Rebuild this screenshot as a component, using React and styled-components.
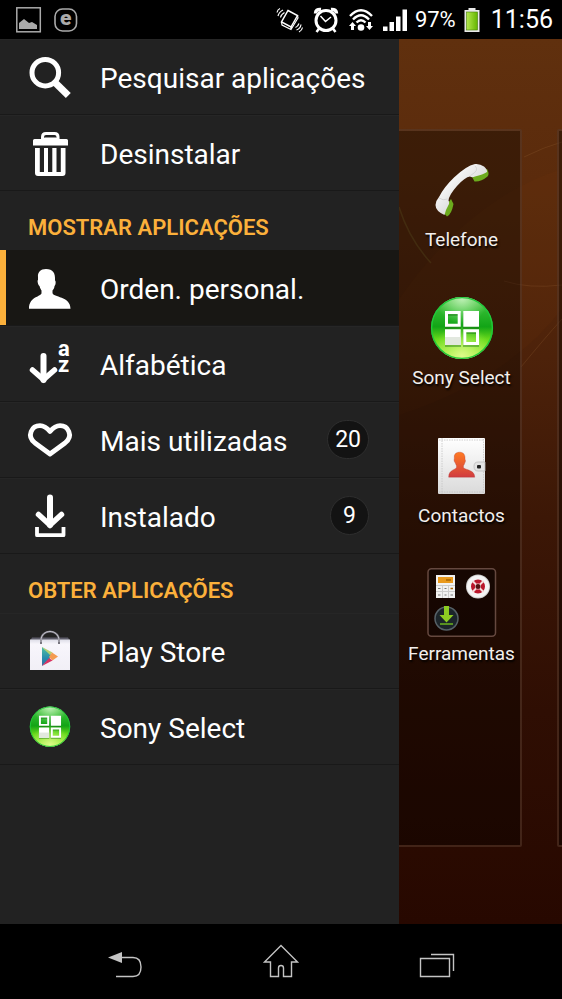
import React from 'react';
import styled, { createGlobalStyle, css } from 'styled-components';

const GlobalStyle = createGlobalStyle`
  * { box-sizing: border-box; }
  body { margin: 0; background: #000; font-family: Roboto, "Liberation Sans", sans-serif; color: #fff; }
  button { font: inherit; color: inherit; border: 0; padding: 0; margin: 0; background: none; cursor: pointer; }
  h2, ul { margin: 0; padding: 0; }
  ul { list-style: none; }
  svg { display: block; flex: none; overflow: visible; }
`;

const Screen = styled.div`
  display: flex;
  flex-direction: column;
  min-height: 100vh;
`;

const StatusBar = styled.header`
  display: flex;
  align-items: center;
  justify-content: space-between;
  height: 39px;
  padding: 0 9px 0 16px;
  background: #000;
`;

const StatusGroup = styled.div`
  display: flex;
  align-items: center;
  gap: ${(p) => p.$gap}px;
`;

const BatteryLevel = styled.span`
  font-size: 22px;
  line-height: 26px;
`;

const Clock = styled.time`
  margin-left: 3px;
  font-size: 25px;
  line-height: 30px;
`;

const Body = styled.main`
  flex: 1;
  display: grid;
  grid-template-columns: 71fr 29fr;
`;

const Drawer = styled.nav`
  background: #222;
`;

const Row = styled.button`
  display: flex;
  align-items: center;
  width: 100%;
  height: 76px;
  padding: 0 30px 0 28px;
  text-align: left;
  border-bottom: 1px solid #191919;
  box-shadow: inset 0 1px #262626;
  ${(p) => p.$active && css`
    background: #181714;
    box-shadow: inset 6px 0 #fbb03b;
  `}
`;

const RowLabel = styled.span`
  flex: 1;
  padding: 4px 0 0 28px;
  font-size: 28px;
  line-height: 34px;
  white-space: nowrap;
`;

const Badge = styled.span`
  min-width: 39px;
  height: 39px;
  padding: 0 7px;
  border: 1px solid #2e2e2e;
  border-radius: 20px;
  background: #131313;
  font-size: 23px;
  line-height: 37px;
  text-align: center;
`;

const SectionTitle = styled.h2`
  height: 59px;
  padding: 23px 28px 0;
  color: #fbb03b;
  font-size: 22px;
  font-weight: 600;
  line-height: 28px;
  white-space: nowrap;
`;

const Home = styled.section`
  position: relative;
  display: grid;
  grid-template-columns: 1fr 5px;
  gap: 35px;
  padding: 90px 0 77px;
  overflow: hidden;
  background: linear-gradient(#60300e 0%, #5b2b0c 16%, #4d220a 36%, #3c1706 54%, #2f0e03 76%, #270800 100%);
`;

const WallpaperLines = styled.svg`
  position: absolute;
  inset: 0;
  width: 100%;
  height: 100%;
`;

const Pane = styled.ul`
  position: relative;
  padding: 23px 0 0 4px;
  border: 2px solid rgba(150, 100, 75, 0.32);
  border-left-width: ${(p) => (p.$peek ? 2 : 0)}px;
  border-right-width: ${(p) => (p.$peek ? 0 : 2)}px;
  border-radius: ${(p) => (p.$peek ? '2px 0 0 2px' : '0 2px 2px 0')};
  background: rgba(0, 0, 0, 0.35);
`;

const AppTile = styled.button`
  display: flex;
  flex-direction: column;
  align-items: center;
  width: 100%;
  height: 138px;
`;

const AppName = styled.span`
  margin-top: 2px;
  font-size: 19px;
  line-height: 24px;
  white-space: nowrap;
  color: #f2efed;
  text-shadow: 1px 2px 2px #000;
`;

const SystemBar = styled.footer`
  display: flex;
  align-items: center;
  height: 75px;
  padding: 0 47px;
  background: #000;
`;

const SystemButton = styled.button`
  flex: 1;
  display: flex;
  justify-content: center;
`;

const RowIcon = ({ children }) => (
  <svg width="44" height="48" viewBox="0 0 44 48" fill="none" stroke="#fff" aria-hidden="true">{children}</svg>
);

const TileIcon = ({ children }) => (
  <svg width="72" height="72" viewBox="0 0 72 72" fill="none" aria-hidden="true">{children}</svg>
);

const SelectMark = ({ id }) => (
  <g stroke="none">
    <defs>
      <linearGradient id={id + 'g'} x1="0" y1="0" x2="0" y2="1">
        <stop offset="0" stopColor="#66c95c" />
        <stop offset=".25" stopColor="#2bb62c" />
        <stop offset=".48" stopColor="#12a416" />
        <stop offset=".68" stopColor="#66d81a" />
        <stop offset="1" stopColor="#b5f04e" />
      </linearGradient>
      <radialGradient id={id + 'h'} cx=".5" cy=".02" r=".42">
        <stop offset="0" stopColor="#e0ffd8" stopOpacity=".75" />
        <stop offset="1" stopColor="#c0ffb0" stopOpacity="0" />
      </radialGradient>
      <radialGradient id={id + 'b'} cx=".5" cy=".95" r=".5">
        <stop offset="0" stopColor="#eaff9a" stopOpacity=".8" />
        <stop offset="1" stopColor="#caff70" stopOpacity="0" />
      </radialGradient>
    </defs>
    <circle r="31" fill={`url(#${id}g)`} />
    <circle r="31" fill={`url(#${id}h)`} />
    <circle r="31" fill={`url(#${id}b)`} />
    <circle r="30.4" stroke="#20c93b" strokeWidth="1.4" fill="none" />
    <path fill="#176b12" opacity=".4" fillRule="evenodd" d="M-17-15H-1V1H-17zM-14-12V-3H-4V-12zM1-15H17V1H1zM-17 3H-1V19H-17zM1 3H17V19H1zM4 6V15H14V6z" />
    <path fill="#fff" fillRule="evenodd" d="M-17-17H-1.300V-1.300H-17zM-14-14V-4.300H-4.300V-14zM1.300-17H17V-1.300H1.300zM-17 1.300H-1.300V17H-17zM1.300 1.300H17V17H1.300zM4.300 4.300V14H14V4.300z" />
    <path fill="#e2e8df" d="M-17 9H-1.300V17H-17z" />
  </g>
);

const SearchIcon = () => (
  <RowIcon>
    <circle cx="17.300" cy="19.700" r="13.300" strokeWidth="5" />
    <path d="M27 29.500 40.300 42.500" strokeWidth="7" />
  </RowIcon>
);

const TrashIcon = () => (
  <RowIcon>
    <path d="M14.500 11V8Q14.500 4.500 18 4.500H26.500Q30 4.500 30 8V11" strokeWidth="3" />
    <path d="M5 11.500Q5 10 6.500 10H13Q15 8.500 17 8.500H28Q30 8.500 31.500 10H38.500Q40 10 40 11.500V16.500H5z" fill="#fff" stroke="none" />
    <path d="M7 19H11.800V43H16V19H20V43H24.300V19H28.500V43H32.800V19H37.500V44Q37.500 47 34.500 47H10Q7 47 7 44z" fill="#fff" stroke="none" />
  </RowIcon>
);

const personPath = 'M18 5C12.500 5 9.500 8.500 10 13V16C9 16.500 10 21 11.500 22C12 24 13 25.500 13.500 26.500V29C13.500 33 1 32 1 44.700H42.500C42.500 32 25 33.500 24.500 29V26.500C25.500 25 26.500 24 26.500 22C28 21 28 16.500 27 16.500C27.500 9 25 5 18 5z';

const PersonIcon = () => (
  <RowIcon><path d={personPath} fill="#fff" stroke="none" /></RowIcon>
);

const SortLetters = styled.text`
  fill: #fff;
  stroke: none;
  font: bold 22px Roboto, sans-serif;
`;

const AlphabetIcon = () => (
  <RowIcon>
    <path d="M15.500 16V40" strokeWidth="6" strokeLinecap="round" />
    <path d="M4.500 30 15.500 39.500 26.500 30" strokeWidth="5.500" strokeLinecap="round" />
    <SortLetters x="30" y="16">a</SortLetters>
    <SortLetters x="30" y="32">z</SortLetters>
  </RowIcon>
);

const HeartIcon = () => (
  <RowIcon>
    <path d="M22 38 7 27C-2 19.500 4 9.700 12 9.700C16 9.700 19 12 22 15.500C25 12 28 9.700 32 9.700C40 9.700 46 19.500 37 27z" strokeWidth="4.800" strokeLinejoin="round" />
  </RowIcon>
);

const InstallIcon = () => (
  <RowIcon>
    <path d="M22 5.500V33" strokeWidth="6" strokeLinecap="round" />
    <path d="M10.500 22.500 22 33 33.500 22.500" strokeWidth="5.500" strokeLinecap="round" />
    <path d="M9 35V43.200H35.500V35" strokeWidth="3.800" strokeLinejoin="round" />
  </RowIcon>
);

const PlayStoreIcon = () => (
  <RowIcon>
    <defs>
      <linearGradient id="bag" x1="0" y1="0" x2="0" y2="1">
        <stop offset="0" stopColor="#dcdce6" />
        <stop offset=".15" stopColor="#f8f6fc" />
        <stop offset="1" stopColor="#f1eff6" />
      </linearGradient>
      <linearGradient id="playBlue" x1="0" y1="0" x2="0" y2="1">
        <stop offset="0" stopColor="#4fbfa0" />
        <stop offset=".6" stopColor="#258aae" />
        <stop offset="1" stopColor="#3e6c9c" />
      </linearGradient>
    </defs>
    <path d="M4 10.500H40L42 14H2z" fill="#5c5b68" stroke="none" />
    <path d="M2 12.500H42V43H2z" fill="url(#bag)" stroke="none" />
    <path d="M14 20 24.500 29 14 39z" fill="url(#playBlue)" stroke="none" />
    <path d="M14 20 24.500 25.500 22 28z" fill="#b6cf71" stroke="none" />
    <path d="M24 25.500 30 29.500 24.500 33.500 21 30z" fill="#f49b50" stroke="none" />
    <path d="M14 39 21 31 24.500 33.500z" fill="#d83263" stroke="none" />
    <path d="M13 17V13.500C13 1.500 31 1.500 31 13.500V17" stroke="#77757e" strokeWidth="2" />
    <path d="M13 15V13.500C13 1.500 31 1.500 31 13.500V15" stroke="#d6d5df" strokeWidth=".8" />
  </RowIcon>
);

const SelectIcon = () => (
  <RowIcon><g transform="translate(22 23.700) scale(.65)"><SelectMark id="menu" /></g></RowIcon>
);

const PhoneTile = () => (
  <TileIcon>
    <defs>
      <linearGradient id="handset" x1="0" y1="0" x2="1" y2="1">
        <stop offset=".2" stopColor="#fff" />
        <stop offset=".6" stopColor="#dcdcdc" />
      </linearGradient>
    </defs>
    <path d="M45 21 61 15Q64 20 61.500 22.500Q55 28 48.500 27.500zM16 57 21 62.500Q25.500 60.500 27.500 50L25 45z" fill="#6cab1d" />
    <path d="M49 10Q54 9.500 58 12.500Q61.500 15.500 61 18Q57 20.500 49 22.500Q46 24 44 22.500Q39 23 31 32Q23 41 22.500 46.500Q24 49 22 52Q19.500 56 18.500 61Q9.500 57 9.500 51Q9.500 47 13 43Q18 33 28 23.500Q40 12 49 10z" fill="url(#handset)" />
    <path d="M49 12Q54 16 44.500 21.500M13 44Q17 47 21.500 45" stroke="#cfcfcf" strokeWidth=".8" />
  </TileIcon>
);

const SelectTile = () => (
  <TileIcon><g transform="translate(36 36)"><SelectMark id="tile" /></g></TileIcon>
);

const ContactsTile = () => (
  <TileIcon>
    <defs>
      <linearGradient id="paper" x1="0" y1="0" x2="0" y2="1">
        <stop offset="0" stopColor="#fff" />
        <stop offset="1" stopColor="#dadada" />
      </linearGradient>
      <linearGradient id="contact" x1="0" y1="0" x2="0" y2="1">
        <stop offset="0" stopColor="#ff7a22" />
        <stop offset="1" stopColor="#d13c40" />
      </linearGradient>
    </defs>
    <rect x="12" y="8" width="47" height="56" rx="1" fill="url(#paper)" />
    <path d="M16 8V64M13 10H58M13 62H58M57.500 9V63" stroke="#c4c4c4" strokeWidth=".8" strokeDasharray="1.500 1" />
    <g transform="translate(22 19) scale(.63)"><path d={personPath} fill="url(#contact)" stroke="#a33" strokeWidth=".5" /></g>
    <path d="M59 32H52Q48 32 48 36.500T52 41H59z" fill="#e4e4e4" stroke="#bbb" strokeWidth=".8" />
    <rect x="51" y="35" width="4" height="3.500" rx="1" fill="#222" />
  </TileIcon>
);

const ToolsTile = () => (
  <TileIcon>
    <rect x="2" y=".8" width="67.500" height="67.500" rx="3.500" fill="#0d0301" fillOpacity=".6" stroke="#65483f" strokeWidth="1.500" />
    <rect x="10" y="7" width="19" height="23" fill="#f1f1f1" />
    <rect x="12" y="9" width="15" height="6" fill="#e9991d" />
    <path d="M10 17.500H29M10 23.500H29M16.500 17V30M22.500 17V30" stroke="#ccc" strokeWidth="1" />
    <path d="M12 20.500H14.500M18.500 20.500H20.500M12 27H14.500M18.500 27H20.500M24.500 27H27" stroke="#777" />
    <path d="M24.500 20.500H27M20 12H25" stroke="#a96500" strokeWidth="1.500" />
    <circle cx="52" cy="18.500" r="12" fill="#d0d0d0" />
    <circle cx="52" cy="18.500" r="11" fill="#f4f4f4" />
    <circle cx="52" cy="18.500" r="5" stroke="#b9162b" strokeWidth="4" />
    <path d="M46.500 13 57.500 24M57.500 13 46.500 24" stroke="#f5d9d9" strokeWidth="2" />
    <circle cx="52" cy="18.500" r="2.500" fill="#511" />
    <circle cx="20.500" cy="50.500" r="11.500" fill="#1c252a" stroke="#566167" strokeWidth="1.500" />
    <path d="M18 38H23V47H27.500L20.500 54.500 13.500 47H18z" fill="#8dcc22" />
    <path d="M14 56H27" stroke="#6cb51f" strokeWidth="1.500" />
  </TileIcon>
);

const GalleryStatus = () => (
  <svg width="26" height="26" viewBox="0 0 26 26" fill="none" role="img" aria-label="Imagem">
    <rect x=".8" y=".8" width="23.500" height="24" stroke="#aaa" strokeWidth="1.500" />
    <path d="M3 22V16L8 12 13 16 16 15 21 18V22z" fill="#aaa" />
  </svg>
);

const ELetter = styled.text`
  fill: #aaa;
  font: 900 21px Roboto, sans-serif;
`;

const EStatus = () => (
  <svg width="26" height="26" viewBox="0 0 26 26" fill="none" role="img" aria-label="Notificação">
    <rect x="2" y="2" width="21.500" height="22" rx="7.500" stroke="#aaa" strokeWidth="1.600" />
    <ELetter x="7" y="18">e</ELetter>
  </svg>
);

const VibrateStatus = () => (
  <svg width="26" height="26" viewBox="0 0 26 26" fill="none" stroke="#fff" strokeWidth="1.500" role="img" aria-label="Vibração">
    <path d="M11 3.500 20.500 8.500 14 20 4.500 15z" />
    <path d="M4.500 15 5 18 14 22.500 21 11 20.500 8.500M14 20V22.500" strokeWidth="1.200" />
    <path d="M0 5.500Q.5 2.500 3 1.500M1 9Q2 5 6 3M3.500 10.500Q4 7.500 7.500 5.500M18.500 20.500Q21 19.500 22 16.500M19.500 23Q23.500 21.500 24 17.500M22 25Q25 23.500 25.500 20.500" strokeWidth="1.200" />
  </svg>
);

const AlarmStatus = () => (
  <svg width="26" height="26" viewBox="0 0 26 26" fill="none" stroke="#fff" role="img" aria-label="Alarme">
    <path d="M2.500 6.500Q2.500 2 8 2.500M23.500 6.500Q23.500 2 18 2.500" strokeWidth="3.500" />
    <circle cx="13" cy="13.500" r="10" strokeWidth="3" />
    <path d="M7.500 9 12.500 14.500 18 10" strokeWidth="1.500" />
    <path d="M6.500 21 3.500 25M19.500 21 22.500 25" strokeWidth="2.500" />
  </svg>
);

const WifiStatus = () => (
  <svg width="24" height="24" viewBox="0 0 24 24" fill="none" stroke="#fff" role="img" aria-label="Wi-Fi">
    <path d="M1 8Q12-3.500 23 8M4 11.500Q12 3 20 11.500M7.500 14.500Q12 10 16.500 14.500" strokeWidth="2.400" />
    <circle cx="12" cy="19.500" r="3.300" fill="#fff" stroke="none" />
    <path d="M0 18 3.500 14 7 18H5V22H2V18zM17 18H19V14H22V18H24L20.500 22z" fill="#fff" stroke="none" />
  </svg>
);

const SignalStatus = () => (
  <svg width="24" height="24" viewBox="0 0 24 24" fill="#fff" role="img" aria-label="Rede móvel">
    <path d="M0 18.500H4.500V23H0zM6.500 14H11V23H6.500zM13 8.500H17.500V23H13zM19.500 1.500H24V23H19.500z" />
  </svg>
);

const BatteryStatus = () => (
  <svg width="16" height="26" viewBox="0 0 16 26" role="img" aria-label="Bateria">
    <defs>
      <linearGradient id="charge">
        <stop offset="0" stopColor="#b5e84f" />
        <stop offset="1" stopColor="#64b500" />
      </linearGradient>
    </defs>
    <path d="M4.500 1H11.500V3H15.500V25H.5V3H4.500z" fill="#e9e9e9" />
    <rect x="2.500" y="5" width="11" height="18" fill="url(#charge)" stroke="#457d09" strokeWidth=".6" />
  </svg>
);

const systemIcon = { width: 36, height: 36, viewBox: '0 0 36 36', fill: 'none', stroke: '#c4c4c4', strokeWidth: 1.4, 'aria-hidden': true };

const displayGroup = [
  { label: 'Orden. personal.', Icon: PersonIcon, active: true },
  { label: 'Alfabética', Icon: AlphabetIcon },
  { label: 'Mais utilizadas', Icon: HeartIcon, count: 20 },
  { label: 'Instalado', Icon: InstallIcon, count: 9 },
];
const toolGroup = [
  { label: 'Pesquisar aplicações', Icon: SearchIcon },
  { label: 'Desinstalar', Icon: TrashIcon },
];
const storeGroup = [
  { label: 'Play Store', Icon: PlayStoreIcon },
  { label: 'Sony Select', Icon: SelectIcon },
];
const apps = [
  { name: 'Telefone', Icon: PhoneTile },
  { name: 'Sony Select', Icon: SelectTile },
  { name: 'Contactos', Icon: ContactsTile },
  { name: 'Ferramentas', Icon: ToolsTile },
];

const MenuGroup = ({ items }) => (
  <ul>
    {items.map(({ label, Icon, active, count }) => (
      <li key={label}>
        <Row type="button" $active={active} aria-current={active ? 'true' : undefined}>
          <Icon />
          <RowLabel>{label}</RowLabel>
          {count !== undefined && <Badge>{count}</Badge>}
        </Row>
      </li>
    ))}
  </ul>
);

export default function App() {
  return (
    <Screen>
      <GlobalStyle />
      <StatusBar>
        <StatusGroup $gap={11}>
          <GalleryStatus />
          <EStatus />
        </StatusGroup>
        <StatusGroup $gap={8}>
          <StatusGroup $gap={10}>
            <VibrateStatus />
            <AlarmStatus />
            <WifiStatus />
            <SignalStatus />
          </StatusGroup>
          <BatteryLevel>97%</BatteryLevel>
          <BatteryStatus />
          <Clock>11:56</Clock>
        </StatusGroup>
      </StatusBar>
      <Body>
        <Drawer>
          <MenuGroup items={toolGroup} />
          <SectionTitle>MOSTRAR APLICAÇÕES</SectionTitle>
          <MenuGroup items={displayGroup} />
          <SectionTitle>OBTER APLICAÇÕES</SectionTitle>
          <MenuGroup items={storeGroup} />
        </Drawer>
        <Home>
          <WallpaperLines viewBox="0 0 163 885" preserveAspectRatio="none" fill="none" aria-hidden="true">
            <path d="M0 168Q10 200 32 224" stroke="#7b6428" strokeOpacity=".45" strokeWidth="1.500" />
            <path d="M125 118Q145 108 163 103M105 242Q130 250 163 246M122 328Q145 300 163 280" stroke="#a87340" strokeOpacity=".2" />
            <path d="M0 376Q110 340 163 270V130Q70 160 0 260z" fill="#ff8a30" fillOpacity=".025" />
          </WallpaperLines>
          <Pane>
            {apps.map(({ name, Icon }) => (
              <li key={name}>
                <AppTile type="button">
                  <Icon />
                  <AppName>{name}</AppName>
                </AppTile>
              </li>
            ))}
          </Pane>
          <Pane $peek aria-hidden="true" />
        </Home>
      </Body>
      <SystemBar>
        <SystemButton type="button" aria-label="Voltar">
          <svg {...systemIcon}>
            <path d="M14 13.500H26Q34 13.500 34 23T26 32.500H9" />
            <path d="M1 13.500 15 8V19z" fill="#c4c4c4" stroke="none" />
          </svg>
        </SystemButton>
        <SystemButton type="button" aria-label="Início">
          <svg {...systemIcon}>
            <path d="M18 1.500 34.500 18H28.500V32.500H20.500V24Q20.500 21.500 18 21.500T15.500 24V32.500H7.500V18H1.500z" />
          </svg>
        </SystemButton>
        <SystemButton type="button" aria-label="Aplicações recentes">
          <svg {...systemIcon}>
            <path d="M1.500 14.500H30.500V32.500H1.500zM12 10.500H34.500V27" />
          </svg>
        </SystemButton>
      </SystemBar>
    </Screen>
  );
}
